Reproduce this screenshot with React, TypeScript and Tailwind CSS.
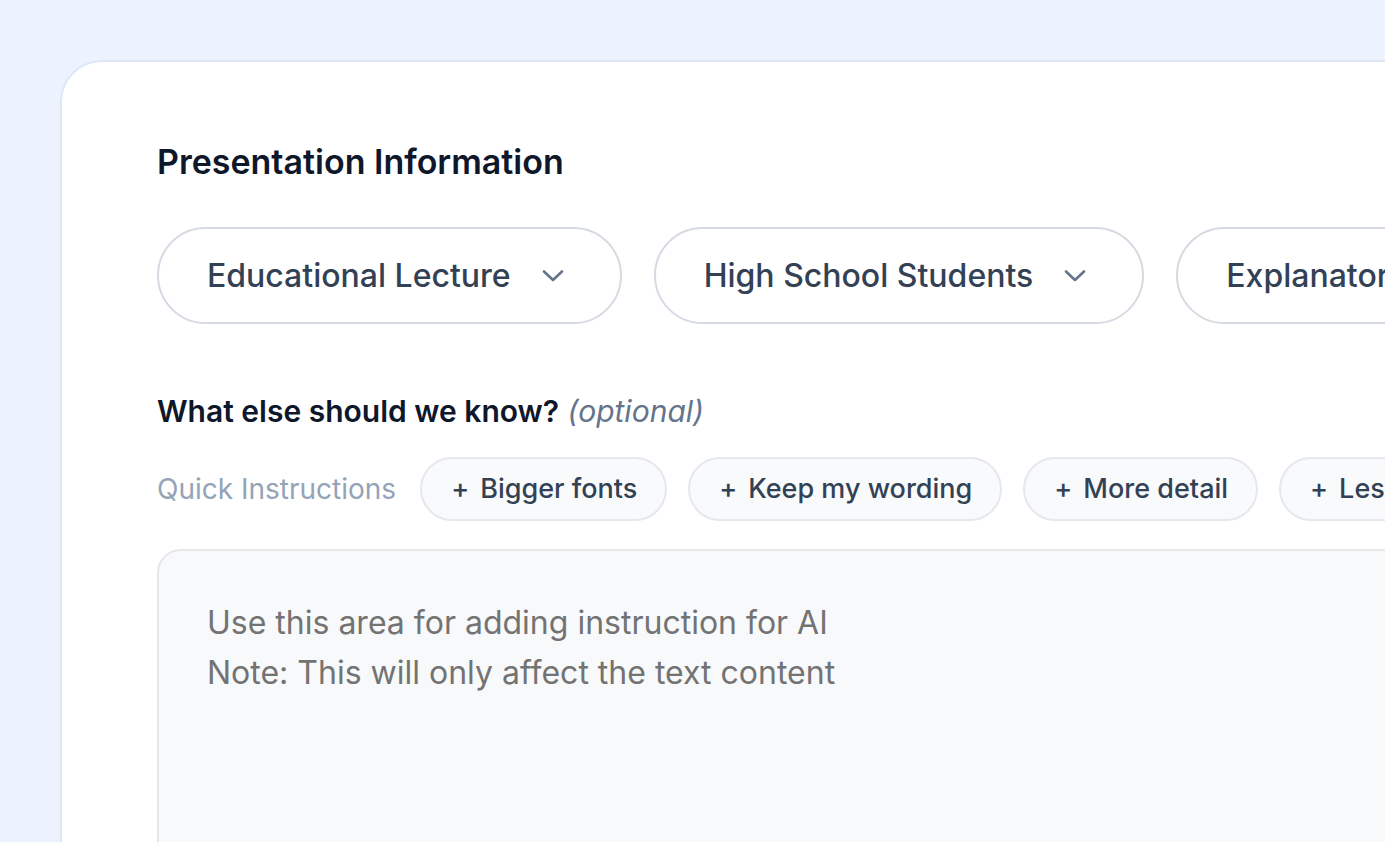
import React from "react";

const Chevron = () => (
  <svg width="22" height="14" viewBox="0 0 22 14" fill="none" className="shrink-0">
    <polyline points="2,2.5 11,11 20,2.5" stroke="#64748b" strokeWidth="2.6" strokeLinecap="round" strokeLinejoin="round" />
  </svg>
);

const Pill = ({ label }: { label: string }) => (
  <button className="flex h-[97px] shrink-0 items-center gap-[31px] rounded-full border-2 border-[#d5dae3] bg-white pl-[48px] pr-[56px] text-[32px] font-medium text-[#334155]">
    <span>{label}</span>
    <Chevron />
  </button>
);

const Chip = ({ label }: { label: string }) => (
  <button className="flex h-[64px] shrink-0 items-center rounded-full border-2 border-[#e5e8ee] bg-[#f8fafc] pl-[29px] pr-[28px] text-[27px] font-medium text-[#334155]">
    <span className="mr-[11px]">+</span>
    <span>{label}</span>
  </button>
);

export default function App() {
  return (
    <div
      className="h-[842px] w-full overflow-hidden bg-[#edf3fe] pl-[60px] pt-[60px]"
      style={{ fontFamily: "Inter, 'Noto Sans', sans-serif" }}
    >
      <div className="h-[900px] w-[1600px] rounded-tl-[42px] border-2 border-[#dfe7f7] bg-white pl-[95px] pt-[78px]">
        <h2 className="text-[34px] font-semibold leading-[44px] text-[#0f172a]">
          Presentation Information
        </h2>
        <div className="mt-[43px] flex gap-[32px]">
          <Pill label="Educational Lecture" />
          <Pill label="High School Students" />
          <Pill label="Explanatory Tone" />
        </div>
        <div className="mt-[67px] text-[30px] leading-[40px]">
          <span className="font-semibold text-[#0f172a]">What else should we know?</span>{" "}
          <span className="italic text-[#64748b]">(optional)</span>
        </div>
        <div className="mt-[26px] flex items-center gap-[21px]">
          <span className="mr-[3px] shrink-0 text-[28px] text-[#94a3b8]">Quick Instructions</span>
          <Chip label="Bigger fonts" />
          <Chip label="Keep my wording" />
          <Chip label="More detail" />
          <Chip label="Less text" />
        </div>
        <div className="mt-[28px] h-[400px] w-[1400px] rounded-[24px] border-2 border-[#e5e7eb] bg-[#f8f9fa] pl-[48px] pt-[47px] text-[32px] leading-[50px] text-[#737373]">
          <div>Use this area for adding instruction for AI</div>
          <div>Note: This will only affect the text content</div>
        </div>
      </div>
    </div>
  );
}
